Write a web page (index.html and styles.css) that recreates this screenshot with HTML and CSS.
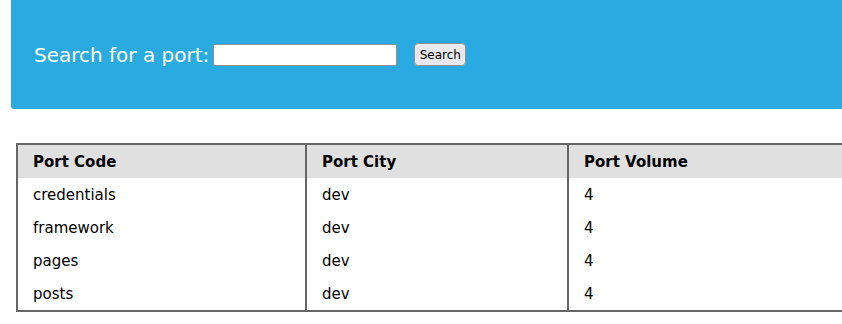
FILE: index.html
```html
<!DOCTYPE html>
<html lang="en">
<head>
  <meta charset="UTF-8" />
  <title>Ports</title>
  <link rel="stylesheet" href="styles.css">
</head>
<body>
  <div class="page">
    <form class="search-bar">
      <label class="search-label" for="port">Search for a port:</label>
      <input class="search-input" id="port" type="text" />
      <button class="search-btn" type="button">Search</button>
    </form>

    <table class="ports">
      <colgroup>
        <col class="col-code">
        <col class="col-city">
        <col class="col-volume">
      </colgroup>
      <thead>
        <tr>
          <th>Port Code</th>
          <th>Port City</th>
          <th>Port Volume</th>
        </tr>
      </thead>
      <tbody>
        <tr><td>credentials</td><td>dev</td><td>4</td></tr>
        <tr><td>framework</td><td>dev</td><td>4</td></tr>
        <tr><td>pages</td><td>dev</td><td>4</td></tr>
        <tr><td>posts</td><td>dev</td><td>4</td></tr>
      </tbody>
    </table>
  </div>
</body>
</html>
```

FILE: styles.css
```css
html, body {
  margin: 0;
  overflow: hidden;
}
body {
  font-family: 'DejaVu Sans', sans-serif;
  color: #000;
  background: #fff;
}
.page {
  width: 920px;
}
.search-bar {
  display: flex;
  align-items: center;
  margin: 0 0 0 11px;
  height: 109px;
  padding: 0 23px;
  background: #29abe2;
  border-radius: 0 0 0 3px;
}
.search-label {
  color: #fff;
  font-size: 20px;
  margin-right: 4px;
}
.search-input {
  width: 184px;
  height: 22px;
  box-sizing: border-box;
  border: 1px solid #8f8f9d;
  border-radius: 2px;
  background: #fff;
  padding: 0 4px;
  margin: 0;
}
.search-btn {
  margin-left: 17px;
  width: 52px;
  height: 23px;
  padding: 0;
  font-family: 'DejaVu Sans', sans-serif;
  font-size: 12px;
  color: #000;
  background: #e9e9ed;
  border: 1px solid #8f8f9d;
  border-radius: 4px;
}
.ports {
  margin: 34px 0 0 16px;
  border-collapse: collapse;
  table-layout: fixed;
  width: 900px;
  border: 2px solid #666;
  font-size: 15px;
}
.col-code { width: 289px; }
.col-city { width: 262px; }
.ports th,
.ports td {
  text-align: left;
  padding: 9px 15px 7px;
  line-height: 17px;
  border-left: 2px solid #666;
  border-right: 2px solid #666;
}
.ports th {
  background: #e0e0e0;
  font-weight: bold;
}
```
